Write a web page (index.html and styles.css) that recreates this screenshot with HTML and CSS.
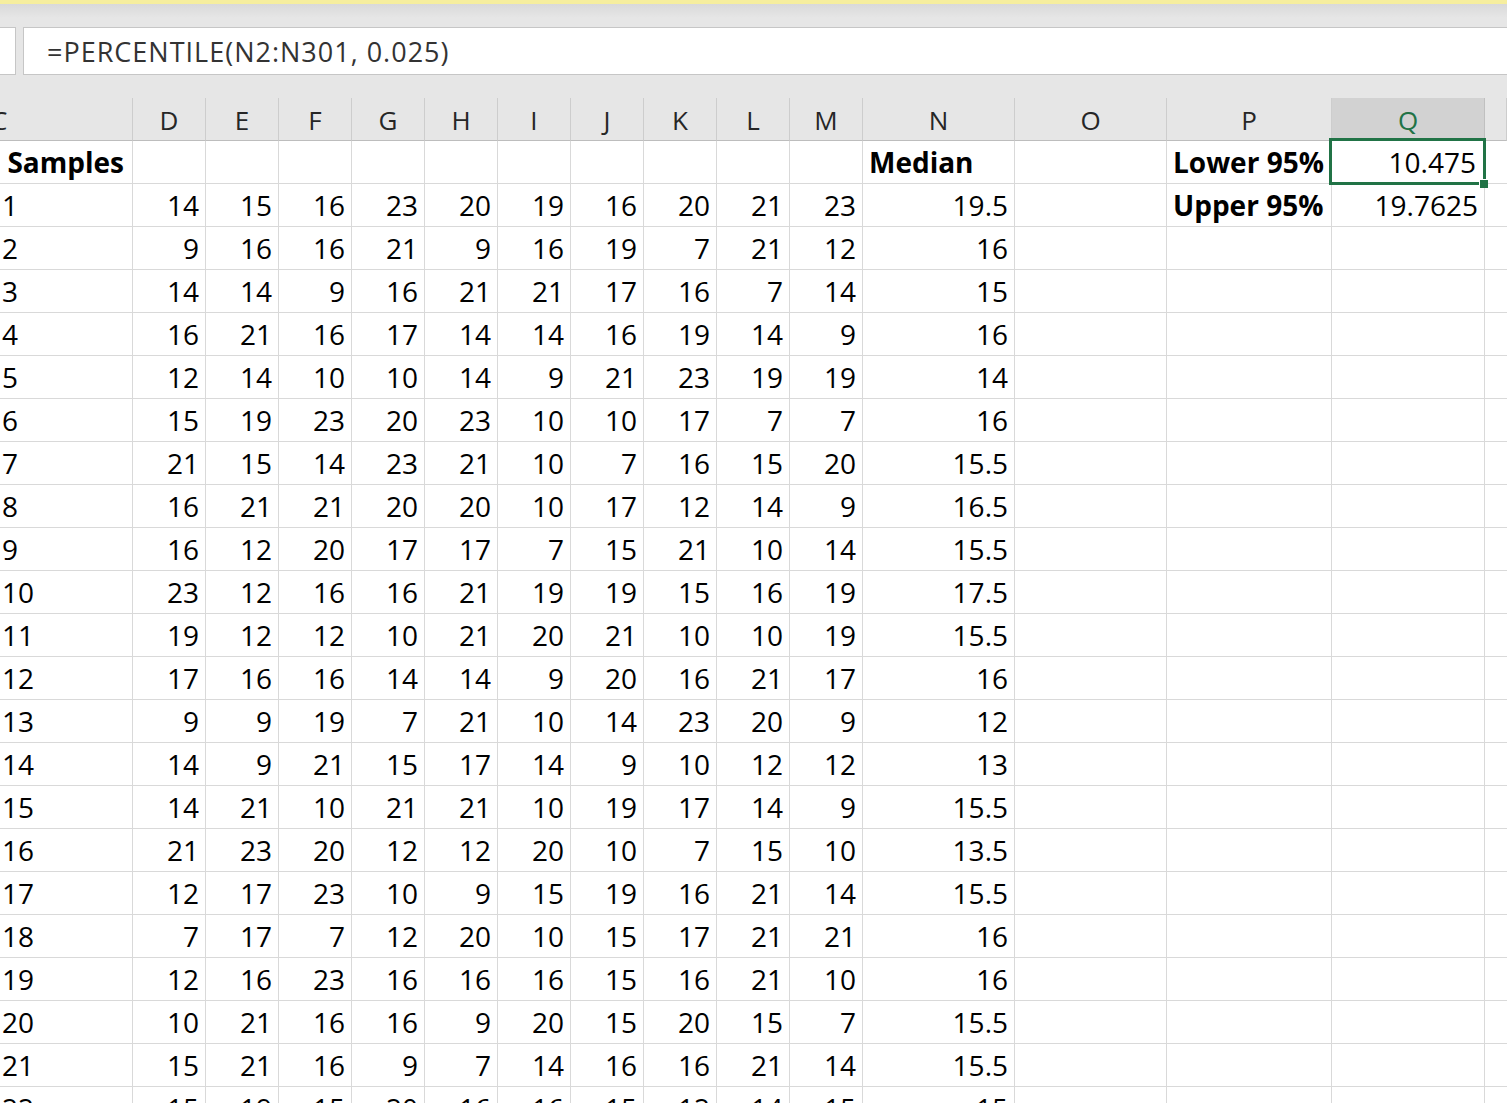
FILE: index.html
```html
<!DOCTYPE html>
<html>
<head>
<meta charset="utf-8">
<link rel="stylesheet" href="styles.css">
</head>
<body>
<div class="topstrip"></div>
<div class="fbar">
  <div class="namebox"></div>
  <div class="formula">=PERCENTILE(N2:N301, 0.025)</div>
</div>
<div class="gap"></div>
<div class="sheet" id="sheet"></div>
<script>
const rows = [
["1",14,15,16,23,20,19,16,20,21,23,"19.5"],
["2",9,16,16,21,9,16,19,7,21,12,"16"],
["3",14,14,9,16,21,21,17,16,7,14,"15"],
["4",16,21,16,17,14,14,16,19,14,9,"16"],
["5",12,14,10,10,14,9,21,23,19,19,"14"],
["6",15,19,23,20,23,10,10,17,7,7,"16"],
["7",21,15,14,23,21,10,7,16,15,20,"15.5"],
["8",16,21,21,20,20,10,17,12,14,9,"16.5"],
["9",16,12,20,17,17,7,15,21,10,14,"15.5"],
["10",23,12,16,16,21,19,19,15,16,19,"17.5"],
["11",19,12,12,10,21,20,21,10,10,19,"15.5"],
["12",17,16,16,14,14,9,20,16,21,17,"16"],
["13",9,9,19,7,21,10,14,23,20,9,"12"],
["14",14,9,21,15,17,14,9,10,12,12,"13"],
["15",14,21,10,21,21,10,19,17,14,9,"15.5"],
["16",21,23,20,12,12,20,10,7,15,10,"13.5"],
["17",12,17,23,10,9,15,19,16,21,14,"15.5"],
["18",7,17,7,12,20,10,15,17,21,21,"16"],
["19",12,16,23,16,16,16,15,16,21,10,"16"],
["20",10,21,16,16,9,20,15,20,15,7,"15.5"],
["21",15,21,16,9,7,14,16,16,21,14,"15.5"],
["22",15,19,15,20,16,16,15,12,14,15,"15"]
];
const cols = ["C","D","E","F","G","H","I","J","K","L","M","N","O","P","Q",""];
const sheet = document.getElementById("sheet");
function cell(cls, text) {
  const d = document.createElement("div");
  d.className = "cell " + cls;
  d.textContent = text;
  sheet.appendChild(d);
  return d;
}
cols.forEach((c, i) => {
  cell("hdr" + (i === 0 ? " hdr-c" : "") + (c === "Q" ? " hdr-sel" : ""), c);
});
cell("lbl-c bold", "Bootstrap Samples");
for (let i = 0; i < 10; i++) cell("", "");
cell("bold left", "Median");
cell("", "");
cell("bold left", "Lower 95%");
cell("num sel", "10.475");
cell("last", "");
rows.forEach((r, ri) => {
  cell("left", r[0]);
  for (let i = 1; i <= 11; i++) cell("num", String(r[i]));
  cell("", "");
  if (ri === 0) { cell("bold left", "Upper 95%"); cell("num", "19.7625"); }
  else { cell("", ""); cell("", ""); }
  cell("last", "");
});
</script>
</body>
</html>
```

FILE: styles.css
```css
html, body {
  margin: 0;
  padding: 0;
  background: #ffffff;
  overflow: hidden;
  width: 1507px;
  height: 1103px;
}
body {
  font-family: "Open Sans", "Liberation Sans", sans-serif;
  color: #000;
}
.topstrip {
  height: 23px;
  border-top: 4px solid #f6ee9e;
  background: linear-gradient(#d9d9d9, #e6e6e6 60%);
}
.fbar {
  height: 48px;
  background: #e6e6e6;
  display: flex;
  gap: 7px;
}
.namebox {
  width: 15px;
  background: #fff;
  border: 1px solid #c6c6c6;
  border-left: none;
}
.formula {
  flex: 1;
  background: #fff;
  border: 1px solid #c6c6c6;
  border-right: none;
  padding-left: 23px;
  font-size: 27px;
  letter-spacing: 1px;
  line-height: 48px;
  color: #333;
  white-space: nowrap;
}
.gap {
  height: 23px;
  background: #e6e6e6;
}
.sheet {
  display: grid;
  grid-template-columns: 133px repeat(10, 73px) 152px 152px 165px 153px 1fr;
  grid-auto-rows: 43px;
}
.cell {
  box-sizing: border-box;
  border-right: 1px solid #d9d9d9;
  border-bottom: 1px solid #d9d9d9;
  font-size: 28px;
  line-height: 42px;
  white-space: nowrap;
  overflow: hidden;
  padding: 0 6px;
}
.hdr {
  background: #e6e6e6;
  border-right: 1px solid #cdcdcd;
  border-bottom: 1px solid #bdbdbd;
  text-align: center;
  font-size: 26px;
  color: #262626;
  line-height: 44px;
}
.hdr-c {
  text-align: left;
  text-indent: -9px;
  padding: 0;
}
.hdr-sel {
  background: #d2d2d2;
  color: #217346;
  border-right-color: #c0c0c0;
}
.num { text-align: right; }
.left { text-align: left; padding-left: 2px; }
.bold { font-weight: 700; padding-left: 6px; }
.lbl-c {
  font-weight: 700;
  display: flex;
  justify-content: flex-end;
  padding-right: 8px;
}
.last { border-right: none; }
.sel {
  position: relative;
  overflow: visible;
  padding-right: 8px;
}
.sel::before {
  content: "";
  position: absolute;
  left: -3px;
  top: -3px;
  right: -2px;
  bottom: -2px;
  border: 3px solid #217346;
}
.sel::after {
  content: "";
  position: absolute;
  right: -4px;
  bottom: -5px;
  width: 8px;
  height: 8px;
  background: #217346;
  border-left: 1px solid #fff;
  border-top: 1px solid #fff;
}
```
